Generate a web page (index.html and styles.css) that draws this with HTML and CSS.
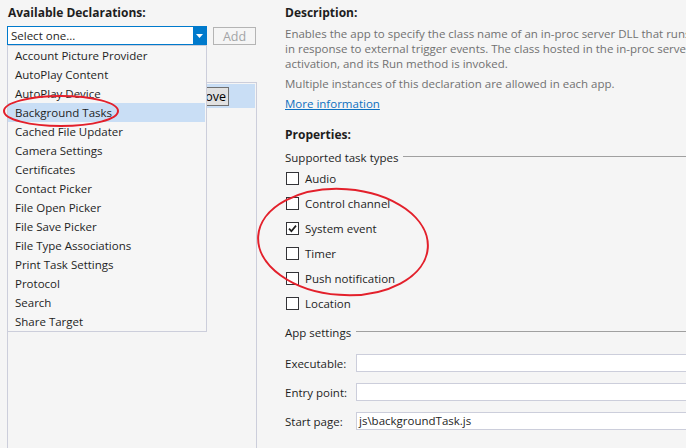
FILE: index.html
```html
<!DOCTYPE html>
<html>
<head>
<meta charset="utf-8">
<title>Declarations</title>
<link rel="stylesheet" href="styles.css">
</head>
<body>
<div class="page">
  <div class="left">
    <div class="heading heading-left">Available Declarations:</div>
    <div class="picker-row">
      <div class="combo">
        <span class="combo-text">Select one...</span>
        <span class="combo-arrow"><svg width="7" height="4" viewBox="0 0 7 4"><path d="M0 0h7L3.5 4z" fill="#fff"/></svg></span>
      </div>
      <button class="btn btn-add">Add</button>
      <ul class="dropdown">
        <li>Account Picture Provider</li>
        <li>AutoPlay Content</li>
        <li>AutoPlay Device</li>
        <li class="hover">Background Tasks</li>
        <li>Cached File Updater</li>
        <li>Camera Settings</li>
        <li>Certificates</li>
        <li>Contact Picker</li>
        <li>File Open Picker</li>
        <li>File Save Picker</li>
        <li>File Type Associations</li>
        <li>Print Task Settings</li>
        <li>Protocol</li>
        <li>Search</li>
        <li>Share Target</li>
      </ul>
    </div>
    <div class="supported">
      <div class="supported-row">
        <span class="supported-name">Background Tasks</span>
        <button class="btn btn-remove">Remove</button>
      </div>
    </div>
  </div>

  <div class="right">
    <div class="heading">Description:</div>
    <p class="desc">Enables the app to specify the class name of an in-proc server DLL that runs the app code in the background<br>in response to external trigger events. The class hosted in the in-proc server DLL receives the background<br>activation, and its Run method is invoked.</p>
    <p class="desc desc-note">Multiple instances of this declaration are allowed in each app.</p>
    <a class="more" href="#">More information</a>

    <div class="heading heading-props">Properties:</div>
    <div class="group-title">Supported task types</div>
    <div class="checks">
      <label class="check"><span class="box"></span><span>Audio</span></label>
      <label class="check"><span class="box"></span><span>Control channel</span></label>
      <label class="check"><span class="box"><svg width="11" height="11" viewBox="0 0 11 11"><path d="M2 5.6l2.4 2.6L9 2.6" fill="none" stroke="#1e1e1e" stroke-width="1.7"/></svg></span><span>System event</span></label>
      <label class="check"><span class="box"></span><span>Timer</span></label>
      <label class="check"><span class="box"></span><span>Push notification</span></label>
      <label class="check"><span class="box"></span><span>Location</span></label>
    </div>

    <div class="group-title group-app">App settings</div>
    <div class="fields">
      <div class="field"><span class="field-label">Executable:</span><span class="input"></span></div>
      <div class="field"><span class="field-label">Entry point:</span><span class="input"></span></div>
      <div class="field"><span class="field-label">Start page:</span><span class="input">js\backgroundTask.js</span></div>
    </div>
  </div>
</div>

<svg class="annotations" width="686" height="448" viewBox="0 0 686 448">
  <ellipse cx="61" cy="111" rx="57" ry="15" fill="none" stroke="#e3202b" stroke-width="2"/>
  <ellipse cx="343" cy="242" rx="85" ry="53" fill="none" stroke="#e3202b" stroke-width="2" transform="rotate(4 343 242)"/>
</svg>
</body>
</html>
```

FILE: styles.css
```css
* { box-sizing: border-box; }

html, body {
  margin: 0;
  padding: 0;
  width: 686px;
  height: 448px;
  overflow: hidden;
  background: #f5f5f5;
}

body {
  position: relative;
  font-family: "Open Sans", "Noto Sans", sans-serif;
  font-size: 11.5px;
  line-height: 15px;
  color: #1e1e1e;
}

.page {
  display: flex;
  height: 448px;
}

.left {
  width: 257px;
  flex: none;
  padding: 5px 0 0 7px;
  display: flex;
  flex-direction: column;
}

.heading {
  font-weight: 700;
  font-size: 12px;
  height: 15px;
  color: #1e1e1e;
  white-space: nowrap;
}

.heading-left { padding-left: 1px; }

.picker-row {
  position: relative;
  display: flex;
  align-items: flex-start;
  margin-top: 6px;
}

.combo {
  width: 200px;
  height: 19px;
  border: 1px solid #007acc;
  background: #fff;
  display: flex;
}

.combo-text {
  flex: 1;
  padding-left: 3px;
  line-height: 17px;
}

.combo-arrow {
  width: 13px;
  background: #007acc;
  display: flex;
  align-items: center;
  justify-content: center;
}

.btn {
  font-family: inherit;
  font-size: 11.5px;
  line-height: 15px;
  margin: 0;
  padding: 0;
}

.btn-add {
  margin-left: 6px;
  margin-top: 1px;
  width: 43px;
  height: 18px;
  border: 1px solid #b4b4b4;
  background: #f5f5f5;
  color: #a2a4a5;
  font-size: 12.5px;
}

.dropdown {
  position: absolute;
  top: 19px;
  left: 0;
  width: 200px;
  margin: 0;
  padding: 0 1px 0 0;
  list-style: none;
  background: #f6f6f6;
  border: 1px solid #cccedb;
  z-index: 2;
}

.dropdown li {
  height: 19px;
  line-height: 19px;
  padding-left: 7px;
  white-space: nowrap;
}

.dropdown li.hover { background: #c9def5; }

.supported {
  margin-top: 37px;
  flex: 1;
  border: 1px solid #cccedb;
  border-bottom: none;
  padding: 1px 1px 0 0;
}

.supported-row {
  height: 24px;
  background: #c9def5;
  display: flex;
  align-items: center;
  padding: 0 26px 0 7px;
}

.supported-name { flex: 1; }

.btn-remove {
  height: 19px;
  padding: 0 2px 0 8px;
  border: 1px solid #707070;
  background: #e1e1e1;
  color: #000;
  font-size: 12.5px;
}

.right {
  width: 540px;
  flex: none;
  margin-left: 28px;
  padding-top: 5px;
}

.desc {
  margin: 6px 0 0;
  color: #717171;
  white-space: nowrap;
}

.desc-note { margin-top: 5px; }

.more {
  display: inline-block;
  margin-top: 5px;
  color: #0e70c0;
  text-decoration: underline;
}

.heading-props { margin-top: 16px; }

.group-title {
  display: flex;
  margin-top: 8px;
  gap: 5px;
  height: 15px;
  white-space: nowrap;
}

.group-title::after {
  content: "";
  flex: 1;
  margin-top: 6px;
  height: 0;
  border-top: 1px solid #a0a0a0;
}

.group-app { margin-top: 9px; }

.checks {
  margin-top: 1px;
  display: flex;
  flex-direction: column;
}

.check {
  height: 25px;
  display: flex;
  align-items: center;
}

.box {
  width: 13px;
  height: 13px;
  margin-left: 1px;
  margin-right: 6px;
  border: 1px solid #333337;
  background: #fff;
  display: flex;
  align-items: center;
  justify-content: center;
}

.fields {
  margin-top: 14px;
  display: flex;
  flex-direction: column;
  gap: 11px;
}

.field {
  display: flex;
  align-items: center;
  height: 18px;
}

.field-label { width: 71px; flex: none; }

.input {
  flex: 1;
  height: 18px;
  border: 1px solid #cccedb;
  background: #fff;
  padding-left: 2px;
  line-height: 16px;
}

.annotations {
  position: absolute;
  left: 0;
  top: 0;
  pointer-events: none;
  z-index: 5;
}
```
